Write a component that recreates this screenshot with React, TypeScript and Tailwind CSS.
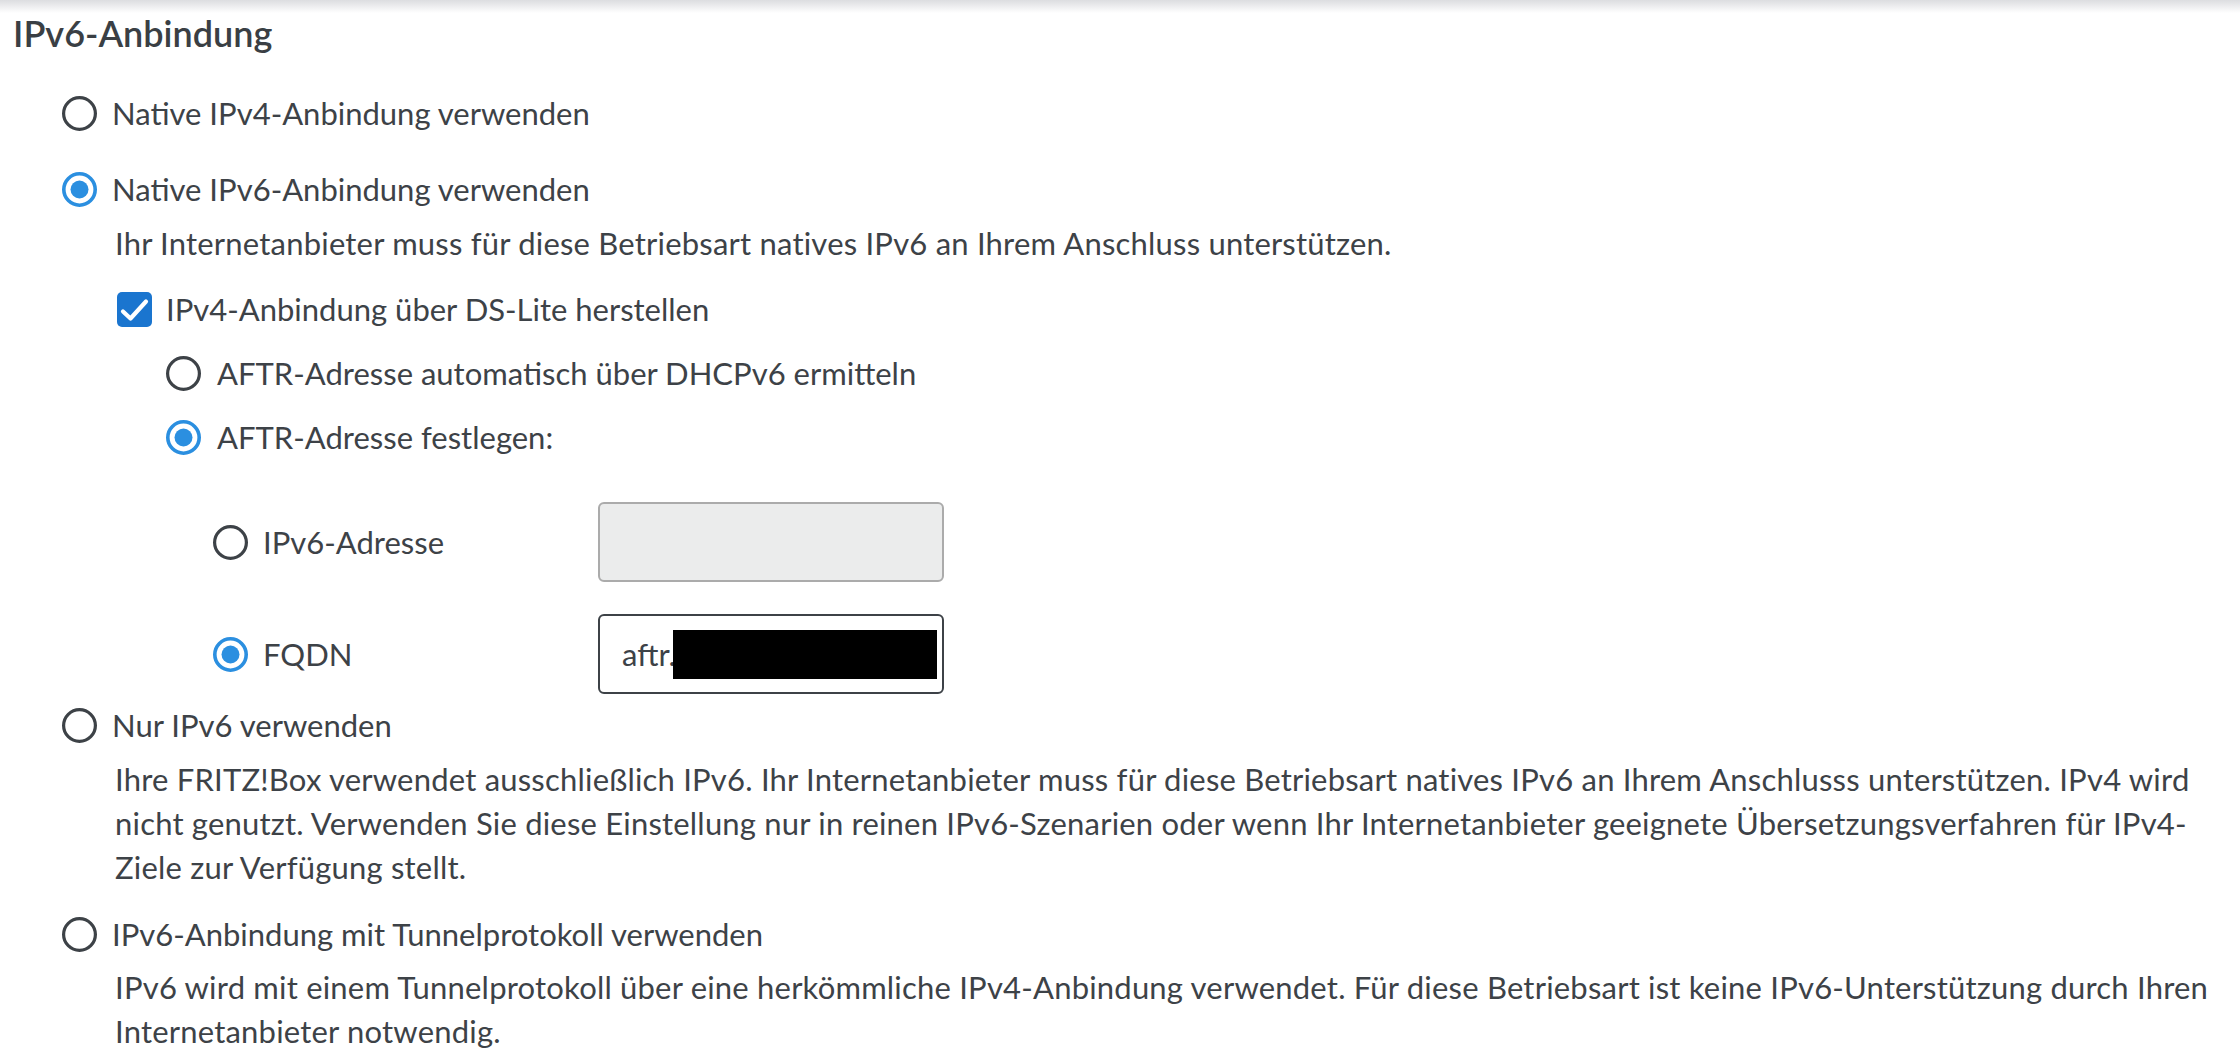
import React from "react";

function Radio({ checked }: { checked?: boolean }) {
  if (checked) {
    return (
      <svg width="35" height="35" viewBox="0 0 35 35" className="shrink-0">
        <circle cx="17.5" cy="17.5" r="15.7" fill="#fff" stroke="#2b8fe0" strokeWidth="3.6" />
        <circle cx="17.5" cy="17.5" r="9" fill="#2b8fe0" />
      </svg>
    );
  }
  return (
    <svg width="35" height="35" viewBox="0 0 35 35" className="shrink-0">
      <circle cx="17.5" cy="17.5" r="15.9" fill="#fff" stroke="#3d4247" strokeWidth="3.2" />
    </svg>
  );
}

function Checkbox() {
  return (
    <div className="flex h-[35px] w-[35px] shrink-0 items-center justify-center rounded-[5px] bg-[#1a75cf]">
      <svg width="35" height="35" viewBox="0 0 35 35">
        <path d="M6 19.5 L13.5 26.5 L29 9.5" fill="none" stroke="#fff" strokeWidth="4.2" strokeLinecap="round" strokeLinejoin="round" />
      </svg>
    </div>
  );
}

export default function App() {
  return (
    <div className="relative min-h-screen bg-white text-[#3d4247] font-['Lato','Noto_Sans',sans-serif] text-[31px] leading-[44px]">
      <div className="absolute inset-x-0 top-0 h-[13px] bg-linear-to-b from-[#dcdde0] to-white" />
      <div className="relative pt-[11px] pl-[13px]">
        <h2 className="flex h-[44px] items-center text-[36px] font-semibold text-[#3a3f44]">IPv6-Anbindung</h2>

        <div className="mt-[36px] ml-[49px] flex h-[44px] items-center gap-[15px]">
          <Radio />
          <span>Native IPv4-Anbindung verwenden</span>
        </div>

        <div className="mt-[32px] ml-[49px] flex h-[44px] items-center gap-[15px]">
          <Radio checked />
          <span>Native IPv6-Anbindung verwenden</span>
        </div>
        <p className="mt-[10px] ml-[102px] h-[44px] whitespace-nowrap tracking-[0.2px]">
          Ihr Internetanbieter muss für diese Betriebsart natives IPv6 an Ihrem Anschluss unterstützen.
        </p>

        <div className="mt-[22px] ml-[104px] flex h-[44px] items-center gap-[14px]">
          <Checkbox />
          <span>IPv4-Anbindung über DS-Lite herstellen</span>
        </div>

        <div className="mt-[20px] ml-[153px] flex h-[44px] items-center gap-[16px]">
          <Radio />
          <span>AFTR-Adresse automatisch über DHCPv6 ermitteln</span>
        </div>

        <div className="mt-[20px] ml-[153px] flex h-[44px] items-center gap-[16px]">
          <Radio checked />
          <span>AFTR-Adresse festlegen:</span>
        </div>

        <div className="mt-[43px] ml-[200px] flex h-[80px] items-center gap-[15px]">
          <Radio />
          <span className="w-[320px]">IPv6-Adresse</span>
          <div className="h-[80px] w-[346px] rounded-[6px] border-2 border-[#ababab] bg-[#ebecec]" />
        </div>

        <div className="mt-[32px] ml-[200px] flex h-[80px] items-center gap-[15px]">
          <Radio checked />
          <span className="w-[320px]">FQDN</span>
          <div className="relative flex h-[80px] w-[346px] items-center rounded-[6px] border-2 border-[#3d4247] bg-white pl-[22px]">
            <span>aftr.</span>
            <div className="absolute left-[73px] top-[14px] h-[49px] w-[264px] bg-black" />
          </div>
        </div>

        <div className="mt-[9px] ml-[49px] flex h-[44px] items-center gap-[15px]">
          <Radio />
          <span>Nur IPv6 verwenden</span>
        </div>
        <div className="mt-[10px] ml-[102px] whitespace-nowrap tracking-[0.2px]">
          <div className="h-[44px]">
            Ihre FRITZ!Box verwendet ausschließlich IPv6. Ihr Internetanbieter muss für diese Betriebsart natives IPv6 an Ihrem Anschlusss unterstützen. IPv4 wird
          </div>
          <div className="h-[44px]">
            nicht genutzt. Verwenden Sie diese Einstellung nur in reinen IPv6-Szenarien oder wenn Ihr Internetanbieter geeignete Übersetzungsverfahren für IPv4-
          </div>
          <div className="h-[44px]">Ziele zur Verfügung stellt.</div>
        </div>

        <div className="mt-[23px] ml-[49px] flex h-[44px] items-center gap-[15px]">
          <Radio />
          <span>IPv6-Anbindung mit Tunnelprotokoll verwenden</span>
        </div>
        <div className="mt-[9px] ml-[102px] whitespace-nowrap tracking-[0.2px]">
          <div className="h-[44px]">
            IPv6 wird mit einem Tunnelprotokoll über eine herkömmliche IPv4-Anbindung verwendet. Für diese Betriebsart ist keine IPv6-Unterstützung durch Ihren
          </div>
          <div className="h-[44px]">Internetanbieter notwendig.</div>
        </div>
      </div>
    </div>
  );
}
